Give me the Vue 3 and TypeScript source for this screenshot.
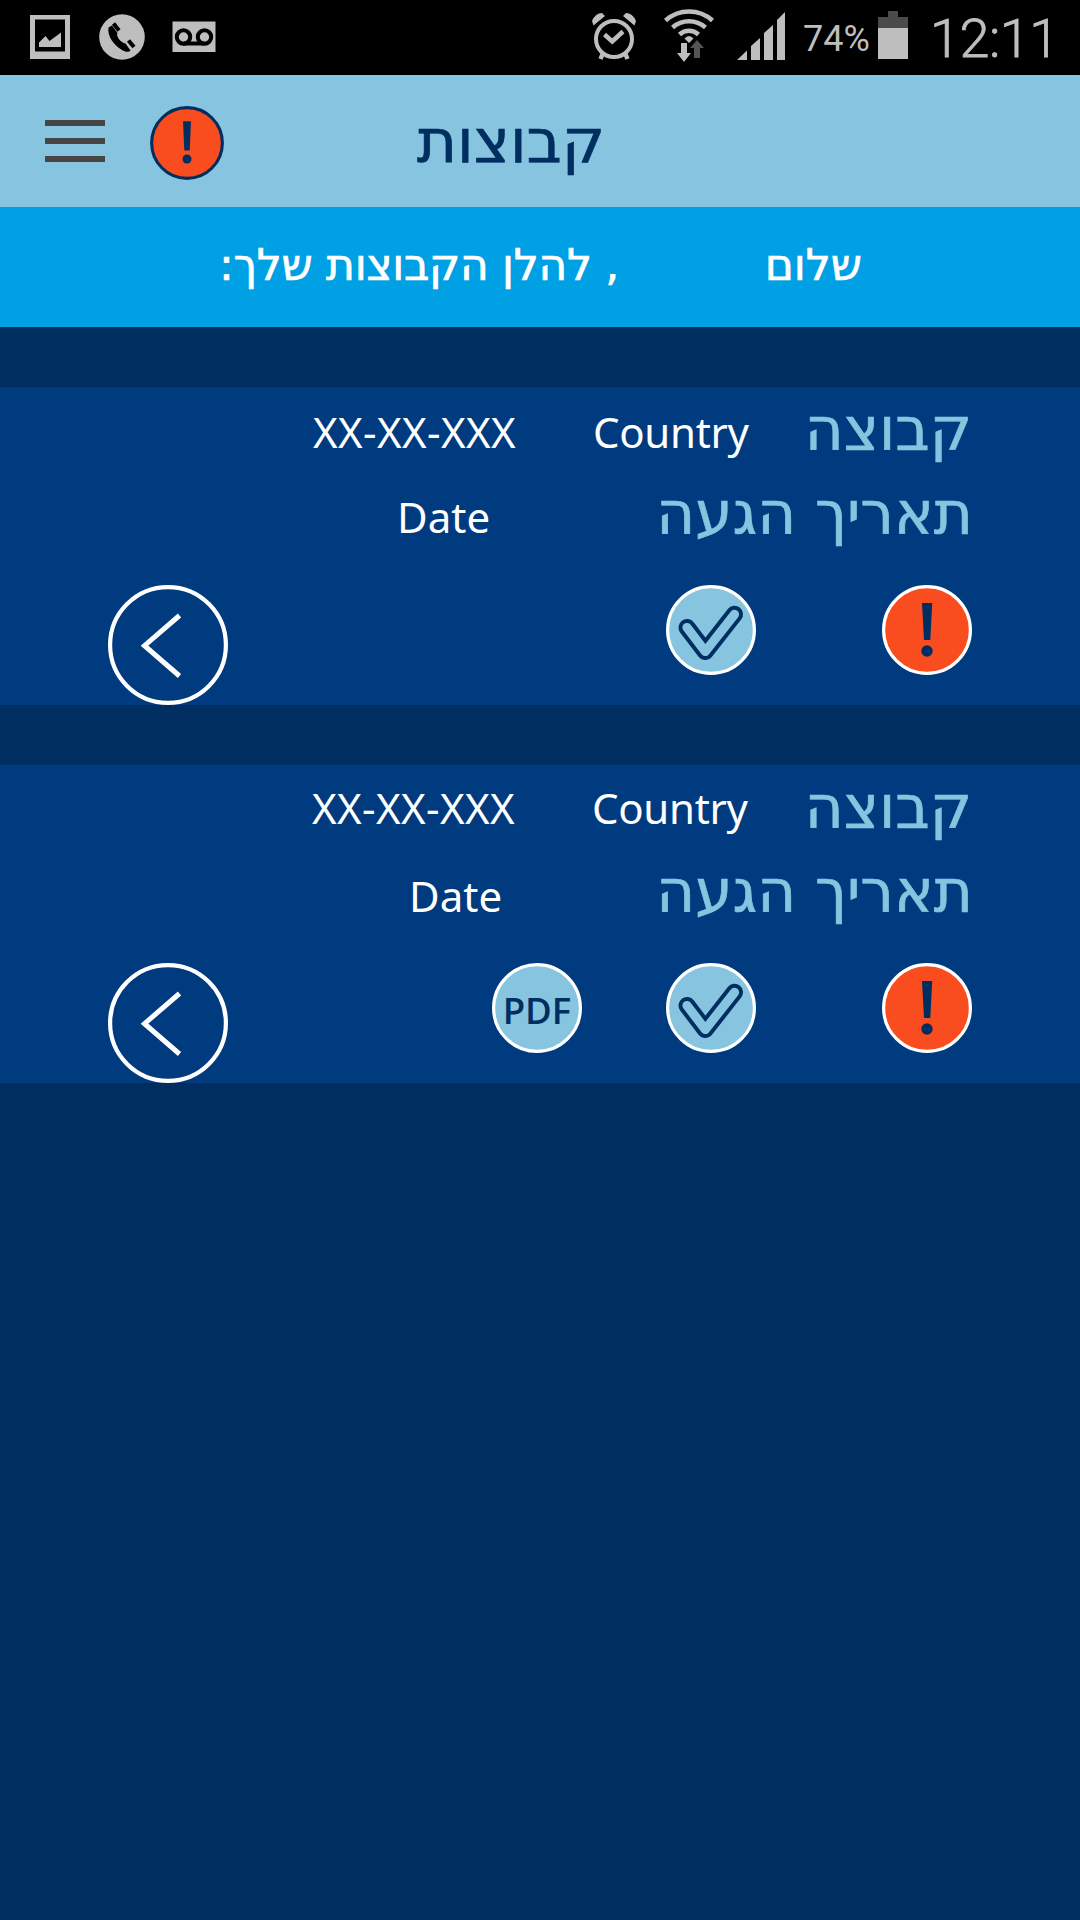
<script setup lang="ts">
interface Group {
  country: string
  code: string
  date: string
  pdf: boolean
  variant: string
}

const groups: Group[] = [
  { country: 'Country', code: 'XX-XX-XXX', date: 'Date', pdf: false, variant: 'first' },
  { country: 'Country', code: 'XX-XX-XXX', date: 'Date', pdf: true, variant: 'second' },
]
</script>

<template>
  <div class="screen">
    <div class="status">
      <svg class="status-left" width="240" height="75" viewBox="0 0 240 75">
        <rect x="30" y="15" width="40" height="44" fill="#bebebe" />
        <rect x="35" y="19.5" width="30" height="32" fill="#000" />
        <path d="M39 47V42.500L45.500 36L49.500 41L61 32.500V47Z" fill="#bebebe" />
        <circle cx="122" cy="37" r="22.800" fill="#bebebe" />
        <path d="M108.500 27.500L112 25.500L117.500 33C115.500 36 121 43 125.500 43.500L130.500 50.500C129 52.500 125 52 122 50C114 45 107 36.500 108.500 27.500Z" fill="#000" />
        <path d="M113.500 23.500L119 30.500M128.500 40.500L134 47" stroke="#000" stroke-width="4" />
        <rect x="172.500" y="21.500" width="43" height="30.500" fill="#bebebe" />
        <g fill="none" stroke="#000" stroke-width="4">
          <circle cx="183.500" cy="37" r="6.700" />
          <circle cx="204.500" cy="37" r="6.700" />
          <path d="M183.500 43.500H204.500" />
        </g>
      </svg>
      <svg width="230" height="75" viewBox="570 0 230 75">
        <g fill="none" stroke="#bebebe">
          <circle cx="614" cy="39" r="18" stroke-width="4" />
          <path d="M604.500 34.500L612.300 41.500L623 31.500" stroke-width="4.500" />
          <path d="M603 53L600.500 59M625 53L627.500 59" stroke-width="4.500" />
          <path d="M665.500 20.500A35 35 0 0 1 712.500 20.500" stroke-width="4.500" />
          <path d="M672.500 27.500A25 25 0 0 1 705.500 27.500" stroke-width="4.500" />
          <path d="M679.500 34.500A14 14 0 0 1 698.500 34.500" stroke-width="4.500" />
        </g>
        <path d="M593.500 25.500L592 21Q595.500 13 602 13L605 16ZM634.500 25.500L636 21Q632.500 13 626 13L623 16Z" fill="#bebebe" />
        <path d="M684.500 38.500Q689 33.500 693.500 38.500L689 43Z" fill="#bebebe" />
        <path d="M681 43H687V53H691L684 62L677 53H681Z" fill="#bebebe" />
        <path d="M697 40L704 48H700V58H694V48H690Z" fill="#545454" />
        <path d="M737 60L747 50.500V60ZM751 60V46L760 38V60ZM764 60V33L773 25V60ZM777 60V20L785 12V60Z" fill="#bebebe" />
      </svg>
      <span class="percent">74%</span>
      <svg class="battery" width="30" height="48" viewBox="0 0 30 48">
        <path d="M10 0H20V6H30V17H0V6H10Z" fill="#4b4b4b" />
        <path d="M0 17H30V48H0Z" fill="#bebebe" />
      </svg>
      <span class="clock">12:11</span>
    </div>

    <header class="header">
      <div class="burger"><i /><i /><i /></div>
      <svg class="alert" width="74" height="74" viewBox="0 0 90 90">
        <circle cx="45" cy="45" r="43" fill="#f94d1f" stroke="#002e60" stroke-width="3.800" />
        <path d="M40.200 18.500H49.800L48.300 54H41.700Z" fill="#002e60" />
        <circle cx="45" cy="64.500" r="5.500" fill="#002e60" />
      </svg>
      <h1 class="title">קבוצות</h1>
    </header>

    <div class="greeting">
      <span class="hello">שלום</span>
      <span class="intro">, להלן הקבוצות שלך:</span>
    </div>

    <section v-for="g in groups" :key="g.variant" class="card" :class="g.variant">
      <div class="row row-group">
        <span class="value code">{{ g.code }}</span>
        <span class="value country">{{ g.country }}</span>
        <span class="label">קבוצה</span>
      </div>
      <div class="row row-date">
        <span class="value date">{{ g.date }}</span>
        <span class="label">תאריך הגעה</span>
      </div>
      <div class="actions">
        <svg class="open" width="120" height="120" viewBox="0 0 120 120">
          <circle cx="60" cy="60" r="57.900" fill="none" stroke="#fff" stroke-width="4.200" />
          <path d="M71.500 30.500L36.500 60.700L71.500 91" fill="none" stroke="#fff" stroke-width="5" />
        </svg>
        <svg v-if="g.pdf" class="pdf" width="90" height="90" viewBox="0 0 90 90">
          <circle cx="45" cy="45" r="43.400" fill="#86c4df" stroke="#fff" stroke-width="3.200" />
          <text x="45" y="60.500" text-anchor="middle" class="pdf-text">PDF</text>
        </svg>
        <svg class="check" width="90" height="90" viewBox="0 0 90 90">
          <circle cx="45" cy="45" r="43.400" fill="#86c4df" stroke="#fff" stroke-width="3.200" />
          <g fill="none" stroke-linecap="round" stroke-linejoin="round">
            <path d="M21 42.500L39.300 66.500L68.500 29.300" stroke="#002e60" stroke-width="17" />
            <path d="M21 42.500L39.300 66.500L68.500 29.300" stroke="#86c4df" stroke-width="9.200" />
          </g>
        </svg>
        <svg width="90" height="90" viewBox="0 0 90 90">
          <circle cx="45" cy="45" r="43.400" fill="#f94d1f" stroke="#fff" stroke-width="3.200" />
          <path d="M40 18H50.200L48.300 55H42Z" fill="#002e60" />
          <circle cx="45" cy="66" r="5.700" fill="#002e60" />
        </svg>
      </div>
    </section>
  </div>
</template>

<style>
body {
  margin: 0;
  background: #002e60;
}
</style>

<style scoped>
.screen {
  width: 1080px;
  height: 1920px;
  overflow: hidden;
  background: #002e60;
  font-family: "DejaVu Sans", sans-serif;
  white-space: nowrap;
}
svg {
  display: block;
  flex: none;
}
.status {
  display: flex;
  height: 75px;
  background: #000;
  color: #bebebe;
  font-family: Roboto, sans-serif;
}
.status-left {
  margin-right: 330px;
}
.percent {
  width: 75px;
  padding-left: 3px;
  font-size: 36px;
  line-height: 79px;
}
.battery {
  margin-top: 11px;
}
.clock {
  padding-left: 22px;
  font-size: 54px;
  font-weight: 300;
  line-height: 78px;
  letter-spacing: -0.5px;
  -webkit-text-stroke: 0.8px currentColor;
}
.header {
  display: flex;
  height: 132px;
  background: #86c4df;
}
.burger {
  display: flex;
  flex-direction: column;
  gap: 12px;
  margin: 45px 45px 0;
}
.burger i {
  width: 60px;
  height: 6px;
  background: #464646;
}
.alert {
  margin-top: 31px;
}
.title,
.greeting,
.label {
  -webkit-text-stroke: 0.7px currentColor;
}
.title {
  margin: 0 0 0 193px;
  color: #002e60;
  font-size: 61px;
  font-weight: 400;
  line-height: 132px;
  direction: rtl;
}
.greeting {
  display: flex;
  direction: rtl;
  box-sizing: border-box;
  height: 120px;
  padding-right: 218px;
  background: #00a0e4;
  color: #fff;
  font-size: 44px;
  line-height: 115px;
}
.hello {
  width: 243px;
}
.intro {
  letter-spacing: -0.3px;
}
.card {
  height: 318px;
  margin-top: 60px;
  background: #003a7f;
}
.row {
  display: grid;
  height: 84px;
  line-height: 84px;
}
.label {
  justify-self: end;
  margin-top: 1px;
  color: #86c4df;
  font-size: 59.6px;
  direction: rtl;
}
.value {
  color: #fff;
  font-family: "Noto Sans", sans-serif;
  font-size: 42px;
}
.row-group {
  grid-template-columns: 280px 200px 1fr;
  padding: 0 108px 0 313px;
}
.row-date {
  grid-template-columns: 200px 1fr;
  padding: 0 107px 0 397px;
}
.code {
  letter-spacing: 0.4px;
}
.country {
  letter-spacing: -0.3px;
}
.row-group .value {
  margin-top: 1px;
}
.first .row-group .value {
  margin-top: 3px;
}
.row-date .value {
  margin-top: 4px;
}
.second .row-group {
  padding-left: 312px;
}
.second .row-date {
  padding-left: 409px;
}
.second .row-date .value {
  margin-top: 5px;
}
.actions {
  display: flex;
  padding: 30px 108px 0;
}
.open {
  margin-right: auto;
}
.pdf {
  margin-right: 84px;
}
.check {
  margin-right: 126px;
}
.pdf-text {
  fill: #002e60;
  font-family: "Open Sans", sans-serif;
  font-size: 36.5px;
  font-weight: 550;
}
</style>
